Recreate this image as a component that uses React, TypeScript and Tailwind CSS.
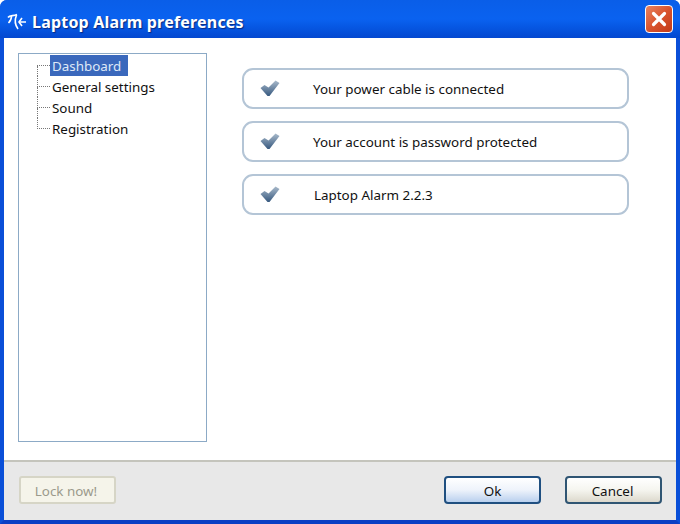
import React from 'react';

const treeItems = ['Dashboard', 'General settings', 'Sound', 'Registration'];
const statusItems = [
  { label: 'Your power cable is connected', indent: 'ml-[33px]' },
  { label: 'Your account is password protected', indent: 'ml-[33px]' },
  { label: 'Laptop Alarm 2.2.3', indent: 'ml-[34px]' },
];

const Check = () => (
  <svg width="20" height="17" viewBox="0 0 20 17" className="shrink-0">
    <defs>
      <linearGradient id="check" x1="0" y1="0" x2="0" y2="1">
        <stop offset="0" stopColor="#a9bacb" />
        <stop offset="1" stopColor="#37597f" />
      </linearGradient>
    </defs>
    <path d="M0.5 8 L4.5 5 L8.5 7.5 L15.5 0.5 L19.5 3 L9.5 16 L7.5 16 Z" fill="url(#check)" />
  </svg>
);

const App = () => {
  return (
    <div className="flex h-[524px] w-[680px] flex-col overflow-hidden rounded-t-[7px] bg-[#0a4fd8] font-['Noto_Sans',sans-serif] text-[13.4px] text-[#111]">
      {/* Title bar */}
      <div className="flex h-[38px] shrink-0 items-center justify-between bg-gradient-to-b from-[#0a5ee8] via-[#0a62f0] to-[#0448d0] pr-[7px] pl-[7px]">
        <div className="flex items-center gap-[5px] pt-[6px]">
          <svg width="20" height="18" viewBox="0 0 20 18" fill="none" stroke="#fff" strokeWidth="1.6">
            <path d="M1 4.5 C3 1.5 6 3.5 10 1.5" />
            <path d="M4.5 3 C4.5 6 3.5 8 1.5 10" />
            <path d="M9.5 2 C7.5 7 8 12 11 16" />
            <path d="M19 9 H12" />
            <path d="M15 5 L12 9 L15 13" />
          </svg>
          <span className="text-[16px] font-bold tracking-[0.2px] text-white [text-shadow:1px_1px_1px_#0a2a80]">
            Laptop Alarm preferences
          </span>
        </div>
        <div className="flex h-[28px] w-[28px] items-center justify-center rounded-[4px] border border-white bg-gradient-to-br from-[#e8835f] via-[#d9532d] to-[#c23a18]">
          <svg width="18" height="18" viewBox="0 0 18 18" stroke="#fff" strokeWidth="3.2" strokeLinecap="round">
            <path d="M3.5 3.5 L14.5 14.5 M14.5 3.5 L3.5 14.5" />
          </svg>
        </div>
      </div>

      {/* Body */}
      <div className="flex min-h-0 flex-1 flex-col border-x-[4px] border-b-[4px] border-x-[#0a4fd8] border-b-[#0a3fc4]">
        <div className="flex flex-1 items-start bg-white pt-[15px] pl-[14px]">
          {/* Tree */}
          <div className="h-[389px] w-[189px] shrink-0 border border-[#8caac6] pt-[1px] pl-[18px]">
            {treeItems.map((item, i) => (
              <div key={item} className="flex h-[21px] items-stretch">
                <div className="flex w-[13px] shrink-0 flex-col">
                  <div
                    className={
                      i === 0
                        ? 'h-[10.5px] border-b border-dotted border-[#777]'
                        : 'h-[10.5px] border-b border-l border-dotted border-[#777]'
                    }
                  />
                  <div className={i === 3 ? 'flex-1' : 'flex-1 border-l border-dotted border-[#777]'} />
                </div>
                <div
                  className={
                    i === 0
                      ? 'flex items-center bg-[#3a68bc] pt-[2px] pr-[7px] pl-[2px] text-[#dfe8f7]'
                      : 'flex items-center px-[2px] pt-[2px]'
                  }
                >
                  {item}
                </div>
              </div>
            ))}
          </div>

          {/* Status cards */}
          <div className="mt-[15px] ml-[35px] flex w-[387px] flex-col gap-[12px]">
            {statusItems.map((item) => (
              <div
                key={item.label}
                className="flex h-[41px] items-center rounded-[11px] border-2 border-[#b4c5d6] pl-[16px]"
              >
                <Check />
                <span className={`${item.indent} pt-[2px]`}>{item.label}</span>
              </div>
            ))}
          </div>
        </div>

        {/* Footer */}
        <div className="flex h-[60px] shrink-0 items-start justify-between border-t-2 border-[#c4c4bc] bg-[#e8e8e8] pt-[14px] pr-[14px] pl-[15px]">
          <button className="h-[28px] w-[97px] rounded-[3px] border-2 border-[#d6d5c6] bg-[#f5f4ea] pt-[2px] pr-[3px] text-[#9b9a8c]">
            Lock now!
          </button>
          <div className="flex gap-[24px]">
            <button className="h-[28px] w-[97px] rounded-[4px] border-2 border-[#1f4f80] bg-gradient-to-b from-[#ffffff] via-[#eef3fb] to-[#b9d0ee] pt-[2px] text-[#111]">
              Ok
            </button>
            <button className="h-[28px] w-[97px] rounded-[4px] border-2 border-[#2f5573] bg-gradient-to-b from-[#ffffff] via-[#f5f5ef] to-[#dcd8cc] pt-[2px] pr-[2px] text-[#111]">
              Cancel
            </button>
          </div>
        </div>
      </div>
    </div>
  );
};

export default App;
